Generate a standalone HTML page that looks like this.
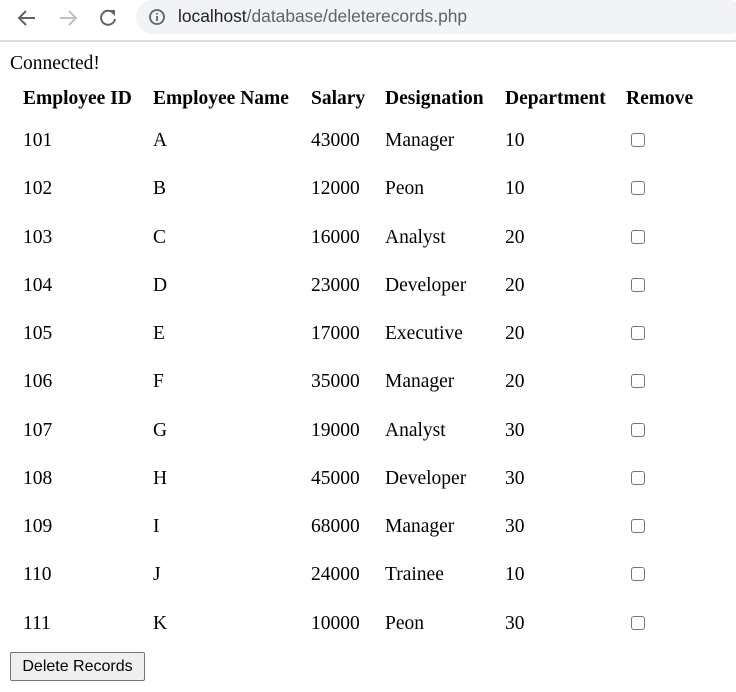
<!DOCTYPE html><html><head><style>
body{margin:0;width:736px;height:692px;background:#fff;position:relative;overflow:hidden;font-family:"Liberation Serif",serif;font-size:19.5px;color:#000}
.bar{position:absolute;left:0;top:0;width:736px;height:40px;background:#fff;border-bottom:2px solid #dadce0}
.pill{position:absolute;left:136px;top:0;width:610px;height:34px;background:#f1f3f4;border-radius:17px}
.url{position:absolute;left:178px;top:6px;font-family:"Liberation Sans",sans-serif;font-size:17.4px;color:#202124}
.url span{color:#5f6368}
.t{position:absolute;line-height:20px;white-space:nowrap}
.b{font-weight:bold}
.cb{position:absolute;width:12px;height:12px;border:1px solid #767676;border-radius:3px;background:#fff}
.btn{position:absolute;left:10px;top:652px;width:133px;height:27px;border:1px solid #767676;border-radius:2px;background:#efefef;font-family:"Liberation Sans",sans-serif;font-size:16px;line-height:27px;text-align:center}
</style></head><body>
<div class="bar"><div class="pill"></div>
<svg style="position:absolute;left:16px;top:8px" width="22" height="20" viewBox="0 0 22 20"><path d="M19 10H4M10 3L3 10l7 7" stroke="#5f6368" stroke-width="2" fill="none"/></svg>
<svg style="position:absolute;left:57px;top:8px" width="22" height="20" viewBox="0 0 22 20"><path d="M3 10h15M12 3l7 7-7 7" stroke="#bdc1c6" stroke-width="2" fill="none"/></svg>
<svg style="position:absolute;left:97px;top:7px" width="22" height="22" viewBox="0 0 22 22"><path d="M17 7A7 7 0 1 0 18 12" stroke="#5f6368" stroke-width="2" fill="none"/><path d="M12 3h6v6z" fill="#5f6368"/></svg>
<svg style="position:absolute;left:148px;top:8px" width="18" height="18" viewBox="0 0 18 18"><circle cx="9" cy="9" r="7" stroke="#5f6368" stroke-width="1.8" fill="none"/><path d="M9 8v5M9 5v1.5" stroke="#5f6368" stroke-width="1.8"/></svg>
<div class="url">localhost<span>/database/deleterecords.php</span></div></div>
<div class="t" style="left:10px;top:54px">Connected!</div>
<div class="t b" style="left:23px;top:89px">Employee ID</div>
<div class="t b" style="left:153px;top:89px">Employee Name</div>
<div class="t b" style="left:311px;top:89px">Salary</div>
<div class="t b" style="left:385px;top:89px">Designation</div>
<div class="t b" style="left:505px;top:89px">Department</div>
<div class="t b" style="left:626px;top:89px">Remove</div>
<script>
var d=[["101","A","43000","Manager","10"],["102","B","12000","Peon","10"],["103","C","16000","Analyst","20"],["104","D","23000","Developer","20"],["105","E","17000","Executive","20"],["106","F","35000","Manager","20"],["107","G","19000","Analyst","30"],["108","H","45000","Developer","30"],["109","I","68000","Manager","30"],["110","J","24000","Trainee","10"],["111","K","10000","Peon","30"]];
var xs=[23,153,311,385,505],h="";
d.forEach(function(r,i){var y=Math.round(131+48.25*i);r.forEach(function(c,j){h+='<div class="t" style="left:'+xs[j]+'px;top:'+y+'px">'+c+'</div>'});h+='<div class="cb" style="left:631px;top:'+(y+2)+'px"></div>'});
document.write(h);
</script>
<div class="btn">Delete Records</div>
</body></html>
